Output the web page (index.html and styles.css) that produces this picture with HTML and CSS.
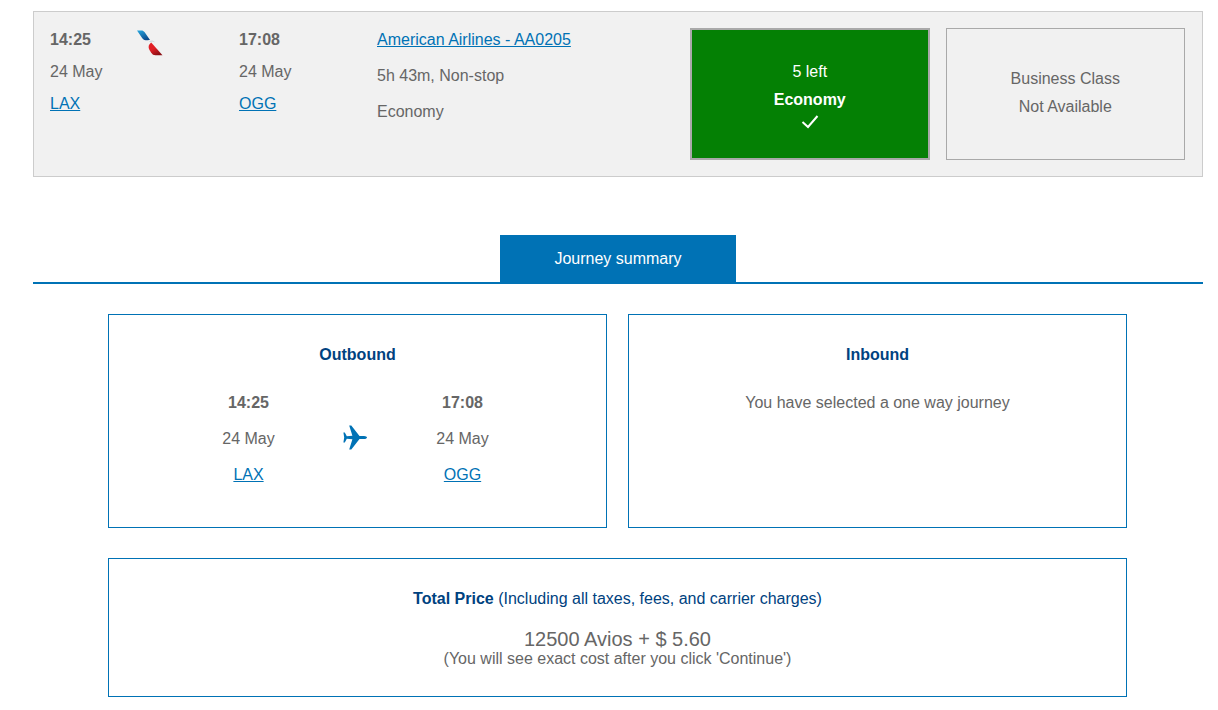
FILE: index.html
```html
<!DOCTYPE html>
<html lang="en">
<head>
<meta charset="UTF-8">
<title>Journey summary</title>
<link rel="stylesheet" href="styles.css">
</head>
<body>
<main class="wrap">
	<section class="flight">
		<div class="route">
			<div class="stop">
				<strong>14:25</strong>
				<span>24 May</span>
				<a href="#lax">LAX</a>
			</div>
			<svg class="airline" width="30" height="30" viewBox="0 0 30 30" role="img" aria-label="American Airlines">
				<defs>
					<linearGradient id="blue" x1="0" y1="0" x2="0.6" y2="1">
						<stop offset="0" stop-color="#27a9e1"/>
						<stop offset="1" stop-color="#0b4a8c"/>
					</linearGradient>
					<linearGradient id="red" x1="0" y1="0" x2="0.6" y2="1">
						<stop offset="0.5" stop-color="#e11f26"/>
						<stop offset="1" stop-color="#8c0f14"/>
					</linearGradient>
				</defs>
				<path fill="url(#blue)" d="M1 2.500h4.500c1.200 0 2.200.6 3 1.600l5.500 7.900c-1.500-.3-2.800.4-4.300.3-1.800-.1-2.800-1-3.600-2.200z"/>
				<path fill="#d3d8dc" d="M13 13.300c2-1.200 4.500-1 6 1.200-1.500-.8-3-.9-4.600-.2z"/>
				<path fill="url(#red)" d="M15.200 14.500l11.300 12.800h-7c-2 0-3.200-.8-4.300-2.500l-1.700-2.800c-1.600-2.700-1.200-5.500 1.700-7.500z"/>
			</svg>
			<div class="stop">
				<strong>17:08</strong>
				<span>24 May</span>
				<a href="#ogg">OGG</a>
			</div>
			<div class="stop details">
				<a href="#flight">American Airlines - AA0205</a>
				<span>5h 43m, Non-stop</span>
				<span>Economy</span>
			</div>
		</div>
		<div class="cabins">
			<button type="button" class="cabin selected">
				<span>5 left</span>
				<strong>Economy</strong>
				<svg class="tick" width="18" height="16" viewBox="0 1 18 16" aria-hidden="true">
					<path fill="none" stroke="#fff" stroke-width="2" d="M1.500 9l5.500 5L16.500 3"/>
				</svg>
			</button>
			<button type="button" class="cabin" disabled>
				<span>Business Class</span>
				<span>Not Available</span>
			</button>
		</div>
	</section>

	<header class="tabs">
		<h2 class="tab">Journey summary</h2>
	</header>

	<section class="summary">
		<div class="panel">
			<h3>Outbound</h3>
			<div class="journey">
				<div class="point">
					<strong>14:25</strong>
					<span>24 May</span>
					<a href="#lax">LAX</a>
				</div>
				<svg class="plane" width="26" height="28" viewBox="0 0 26 28" aria-hidden="true">
					<path fill="#0072b5" d="M24 12.500c0 .8-1.200 1.600-3 1.600h-4.500L8.300 24.500H6.200l3.200-10.300-5.600-.5L1.800 17.500H.4L1.200 12.500.4 7.500h1.400l2 3.800 5.600-.5L6.200.5h2.100L16.500 10.900H21c1.800 0 3 .8 3 1.600z"/>
				</svg>
				<div class="point">
					<strong>17:08</strong>
					<span>24 May</span>
					<a href="#ogg">OGG</a>
				</div>
			</div>
		</div>
		<div class="panel">
			<h3>Inbound</h3>
			<p class="oneWay">You have selected a one way journey</p>
		</div>
		<div class="panel total">
			<h3>Total Price <span>(Including all taxes, fees, and carrier charges)</span></h3>
			<p class="price">12500 Avios + $ 5.60</p>
			<p class="note">(You will see exact cost after you click 'Continue')</p>
		</div>
	</section>
</main>
</body>
</html>
```
FILE: styles.css
```css
* {
	box-sizing: border-box;
}
body {
	margin: 0;
	color: #666;
	background: #fff;
	font: 16px/24px "Liberation Sans", Arial, sans-serif;
}
h2,
h3,
p {
	margin: 0;
	font-size: 16px;
}
a {
	color: #0072b5;
}
.wrap {
	padding: 11px 15px 13px 33px;
}

/* flight row */
.flight {
	display: grid;
	grid-template-columns: 640fr 495fr;
	padding: 16px 17px 16px 16px;
	border: 1px solid #ccc;
	background: #f1f1f1;
}
.route {
	display: grid;
	grid-template-columns: 86px 103px 138px 1fr;
}
.stop {
	display: flex;
	flex-direction: column;
	align-items: flex-start;
	gap: 8px;
}
.details {
	gap: 12px;
}
.cabins {
	display: grid;
	grid-template-columns: 1fr 1fr;
	gap: 16px;
}
.cabin {
	display: flex;
	flex-direction: column;
	align-items: center;
	justify-content: center;
	min-height: 132px;
	padding: 0 0 2px;
	border: 1px solid #a9a9a9;
	color: #666;
	background: none;
	font: 16px/28px "Liberation Sans", Arial, sans-serif;
}
.cabin.selected {
	padding: 0;
	border-width: 2px;
	color: #fff;
	background: #048004;
}

/* tab */
.tabs {
	display: flex;
	justify-content: center;
	margin-top: 58px;
	border-bottom: 2px solid #0072b5;
}
.tab {
	padding: 0 54px;
	color: #fff;
	background: #0072b5;
	font-weight: normal;
	line-height: 47px;
}

/* summary */
.summary {
	display: grid;
	grid-template-columns: 1fr 1fr;
	gap: 30px 21px;
	padding: 30px 76px 0 75px;
}
.panel {
	padding: 22px 20px 34px;
	border: 1px solid #0072b5;
	text-align: center;
	line-height: 36px;
}
.panel h3 {
	margin-bottom: 12px;
	color: #00427f;
}
.panel h3 span {
	font-weight: normal;
}
.journey {
	display: grid;
	grid-template-columns: repeat(3, 107px);
	justify-content: center;
	align-items: center;
	justify-items: center;
	padding-right: 4px;
}
.point {
	display: flex;
	flex-direction: column;
	align-items: center;
}
.total {
	grid-column: 1 / 3;
	padding-bottom: 27px;
}
.price,
.note {
	line-height: 20px;
}
.price {
	font-size: 20px;
}
```
